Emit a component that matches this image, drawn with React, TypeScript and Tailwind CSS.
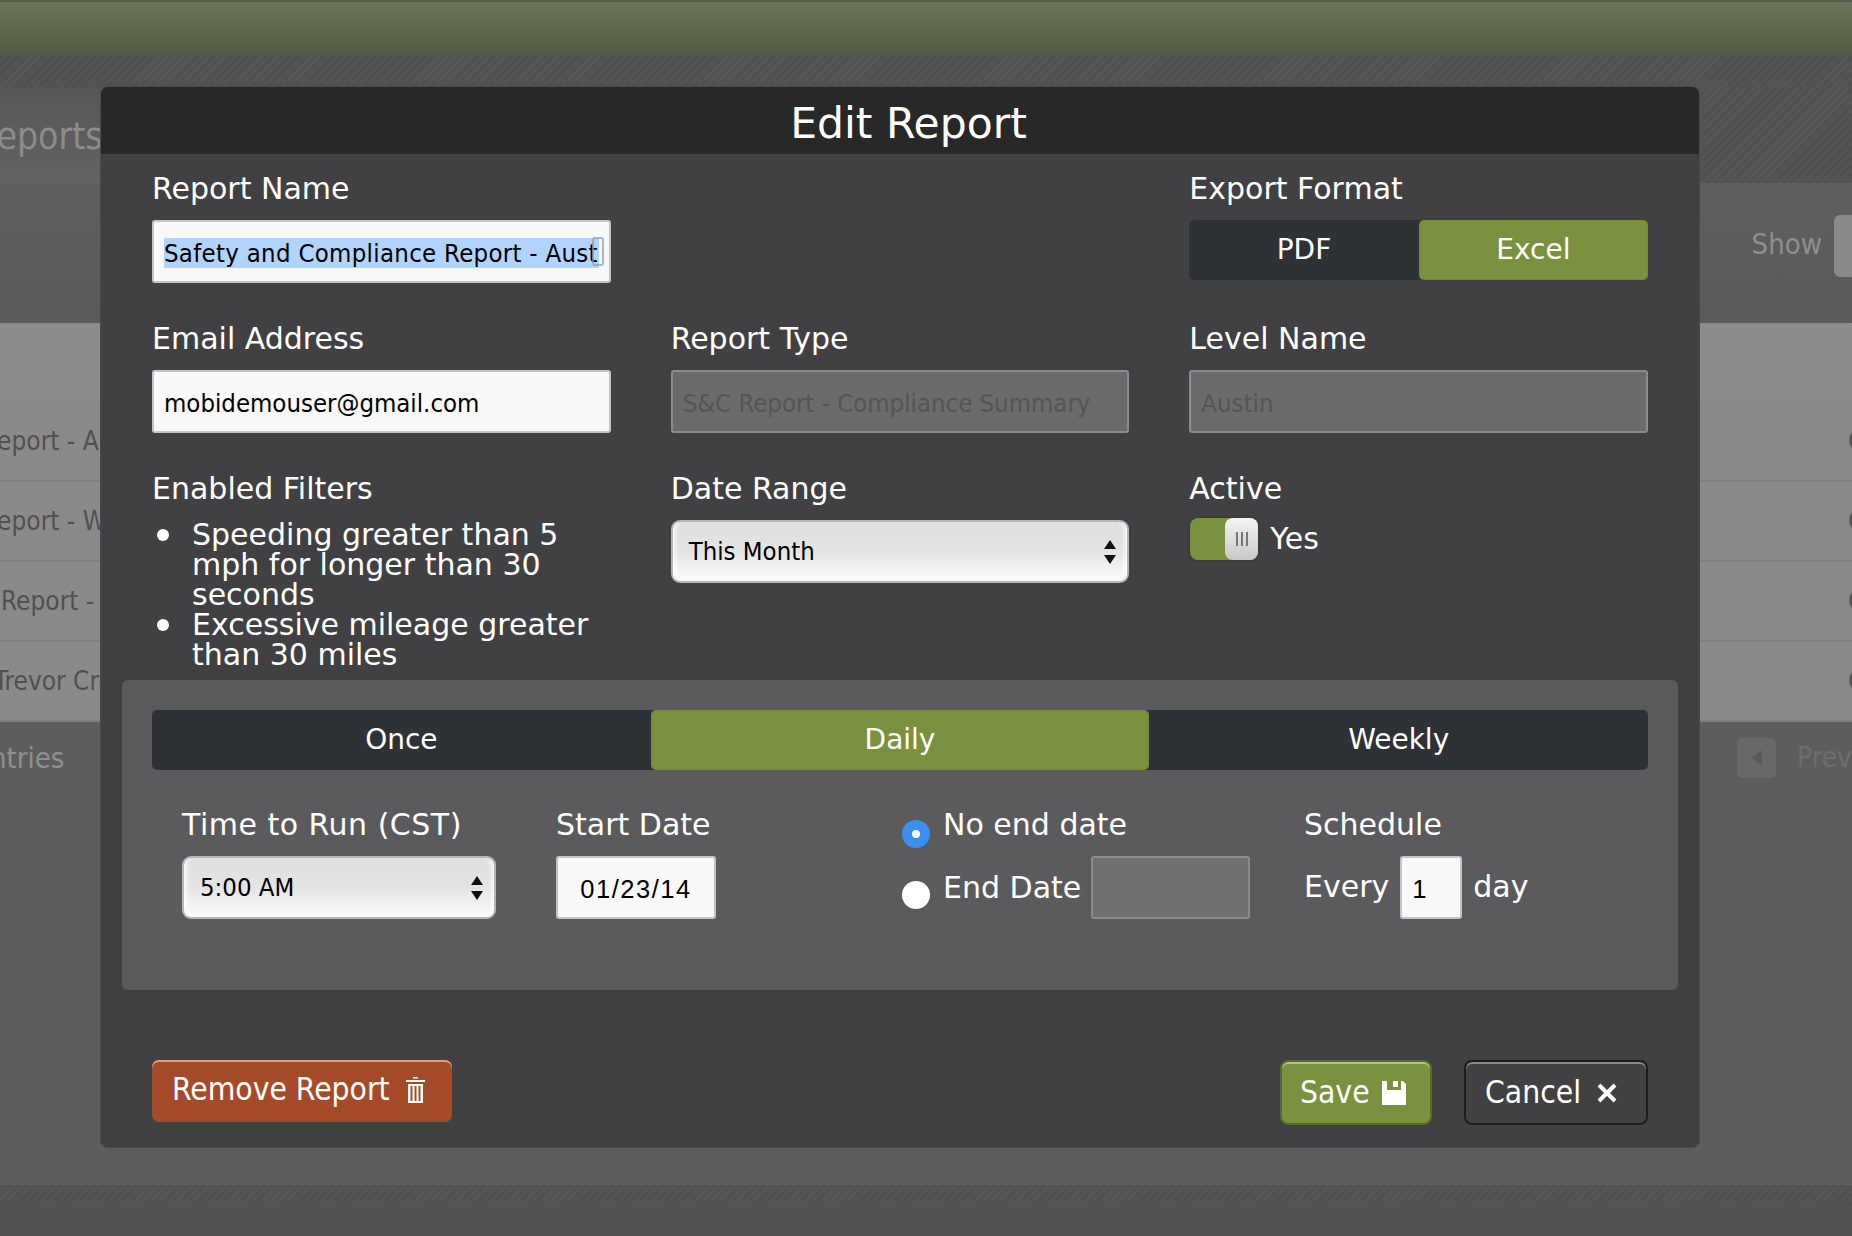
import type { ReactNode } from "react";

const stripes =
  "bg-[repeating-linear-gradient(135deg,#515153_0px,#515153_3px,#555557_3px,#555557_6px)]";
const condensed = "font-['DejaVu_Sans_Condensed','DejaVu_Sans',sans-serif]";

function Label({ children, className = "" }: { children: ReactNode; className?: string }) {
  return <div className={`h-[30px] leading-[30px] text-[30px] text-white whitespace-nowrap ${className}`}>{children}</div>;
}

function TextBox({ children, disabled, className = "" }: { children?: ReactNode; disabled?: boolean; className?: string }) {
  return (
    <div
      className={`flex h-[63px] items-center overflow-hidden rounded-[3px] border-2 px-[10px] pt-[3px] text-[25.500px] whitespace-nowrap font-['DejaVu_Sans_Condensed','DejaVu_Sans',sans-serif] ${
        disabled ? "border-[#8b8b8b] bg-[#6b6b6b] text-[#555555]" : "border-[#c4c4c4] bg-[#f8f8f8] text-black"
      } ${className}`}
    >
      {children}
    </div>
  );
}

function SelectBox({ value, className = "" }: { value: string; className?: string }) {
  return (
    <div
      className={`flex h-[63px] items-center justify-between rounded-[9px] border-2 border-[#b5b5b5] bg-gradient-to-b from-[#dfdfdf] via-[#e4e4e4] to-[#fbfbfb] pl-[16px] pr-[10px] text-[25.500px] text-black shadow-[inset_6px_0_5px_-4px_#ffffff,inset_-6px_0_5px_-4px_#ffffff] font-['DejaVu_Sans_Condensed','DejaVu_Sans',sans-serif] ${className}`}
    >
      <span className="-mt-[1px]">{value}</span>
      <svg width="14" height="24" viewBox="0 0 14 24">
        <path d="M7 0 13 9H1Z M7 24 1 15H13Z" fill="#111" />
      </svg>
    </div>
  );
}

function Segmented({ items, active }: { items: string[]; active: string }) {
  return (
    <div className="flex h-[60px] rounded-[5px] bg-[#2e3136] text-[28px] text-white">
      {items.map((item) => (
        <div
          key={item}
          className={`flex flex-1 items-center justify-center rounded-[5px] ${
            item === active ? "bg-[#7a9140] shadow-[inset_0_0_2px_#5f7432]" : ""
          }`}
        >
          {item}
        </div>
      ))}
    </div>
  );
}

function TableRow({ text, offset }: { text: string; offset: string }) {
  return (
    <div className="flex h-[80px] items-center justify-between overflow-hidden border-b-2 border-[#7f7f7f] bg-[#8a8a8a] text-[26px] text-[#505050] whitespace-nowrap">
      <span className={offset}>{text}</span>
      <span className="w-[4px] overflow-hidden">C</span>
    </div>
  );
}

function Backdrop() {
  return (
    <div className={`flex h-[1236px] flex-col overflow-hidden ${condensed}`}>
      <div className="h-[56px] shrink-0 border-t-2 border-[#555a50] bg-gradient-to-b from-[#6b755a] to-[#525945]" />
      <div className={`h-[31px] shrink-0 ${stripes}`} />
      <div className="flex h-[96px] shrink-0">
        <div className="w-[120px] overflow-hidden bg-gradient-to-b from-[#565656] to-[#636363] pt-[25px] text-[37px] leading-[50px] text-[#8c8c8c] whitespace-nowrap">
          <span className="-ml-[25px] inline-block">Reports</span>
        </div>
        <div className={`flex-1 ${stripes}`} />
      </div>
      <div className="flex h-[140px] shrink-0 items-start justify-end bg-gradient-to-b from-[#5f5f5f] to-[#5a5a5a] pt-[32px]">
        <span className="mt-[14px] mr-[12px] text-[29px] leading-[30px] text-[#8f8f8f]">Show</span>
        <div className="h-[62px] w-[18px] rounded-l-[6px] bg-[#8a8a8a]" />
      </div>
      <div className="h-[79px] shrink-0 bg-[#8c8c8c]" />
      <TableRow text="Report - Austin" offset="-ml-[18px]" />
      <TableRow text="Report - West" offset="-ml-[18px]" />
      <TableRow text="Report - Dallas" offset="ml-[1px]" />
      <TableRow text="Trevor Creek" offset="-ml-[6px]" />
      <div className="flex h-[463px] shrink-0 items-start justify-between bg-[#5d5d5d] pt-[16px]">
        <span className="-ml-[51px] text-[29px] leading-[40px] text-[#8f8f8f]">4 entries</span>
        <div className="flex items-center gap-[21px]">
          <div className="flex h-[40px] w-[39px] items-center justify-center rounded-[5px] bg-[#686868]">
            <svg width="10" height="16" viewBox="0 0 10 16">
              <path d="M10 0V16L0 8Z" fill="#5a5a5a" />
            </svg>
          </div>
          <span className="w-[55px] overflow-hidden text-[28px] leading-[40px] text-[#6d6d6d]">Previous</span>
        </div>
      </div>
      <div className={`h-[20px] shrink-0 ${stripes}`} />
      <div className="flex-1 bg-[#535353]" />
    </div>
  );
}

export default function App() {
  return (
    <div className="relative h-[1236px] overflow-hidden bg-[#535353]">
      <Backdrop />

      <div className="absolute left-[101px] top-[87px] h-[1060px] w-[1598px] overflow-hidden rounded-[7px] bg-[#414143] font-['DejaVu_Sans',sans-serif] shadow-[0_0_0_1px_#4a4a4c]">
        <div className="flex h-[67px] items-center justify-center bg-[#282828] pl-[17px] pt-[6px] text-[42.500px] text-white">Edit Report</div>

        <div className="grid grid-cols-3 gap-x-[60px] gap-y-[41px] px-[51px] pt-[20px]">
          <div>
            <Label className="mb-[16px]">Report Name</Label>
            <TextBox className="relative">
              <span className="flex h-[30px] w-[436px] items-center overflow-hidden bg-[#b0d4fb] tracking-[0.300px]">
                Safety and Compliance Report - Austin
              </span>
              <span className="absolute right-[5px] top-[15px] h-[29px] w-[12px] rounded-[3px] border-2 border-[#8c9aa8]/70" />
            </TextBox>
          </div>
          <div />
          <div>
            <Label className="mb-[16px]">Export Format</Label>
            <div className="flex h-[60px] rounded-[5px] bg-[#2e3136] text-[28px] text-white">
              <div className="flex flex-1 items-center justify-center">PDF</div>
              <div className="flex flex-1 items-center justify-center rounded-[5px] bg-[#7a9140] shadow-[inset_0_0_2px_#5f7432]">Excel</div>
            </div>
          </div>

          <div>
            <Label className="mb-[16px]">Email Address</Label>
            <TextBox>mobidemouser@gmail.com</TextBox>
          </div>
          <div>
            <Label className="mb-[16px]">Report Type</Label>
            <TextBox disabled>S&amp;C Report - Compliance Summary</TextBox>
          </div>
          <div>
            <Label className="mb-[16px]">Level Name</Label>
            <TextBox disabled>Austin</TextBox>
          </div>

          <div>
            <Label className="mb-[16px]">Enabled Filters</Label>
            <ul className="h-[150px] text-[30px] leading-[30px] text-white">
              <li className="flex">
                <span className="ml-[5px] mr-[23px] mt-[9px] h-[12px] w-[12px] shrink-0 rounded-full bg-white" />
                <span>Speeding greater than 5 mph for longer than 30 seconds</span>
              </li>
              <li className="flex">
                <span className="ml-[5px] mr-[23px] mt-[9px] h-[12px] w-[12px] shrink-0 rounded-full bg-white" />
                <span>Excessive mileage greater than 30 miles</span>
              </li>
            </ul>
          </div>
          <div>
            <Label className="mb-[16px]">Date Range</Label>
            <SelectBox value="This Month" />
          </div>
          <div>
            <Label className="mb-[14px]">Active</Label>
            <div className="ml-[1px] flex items-center gap-[12px]">
              <div className="relative h-[42px] w-[68px] rounded-[8px] bg-[#7a9140] shadow-[0_0_3px_#2e2e2e]">
                <div className="absolute inset-y-0 right-0 flex w-[33px] items-center justify-center gap-[3px] rounded-[8px] bg-gradient-to-b from-[#f4f4f4] to-[#c8c8c8]">
                  <span className="h-[14px] w-[2px] bg-[#777777]" />
                  <span className="h-[14px] w-[2px] bg-[#777777]" />
                  <span className="h-[14px] w-[2px] bg-[#777777]" />
                </div>
              </div>
              <span className="text-[30px] leading-[36px] text-white">Yes</span>
            </div>
          </div>
        </div>

        <div className="mx-[21px] mt-[10px] h-[310px] rounded-[6px] bg-[#5b5b5d] px-[30px] pt-[30px]">
          <Segmented items={["Once", "Daily", "Weekly"]} active="Daily" />
          <div className="flex pl-[30px] pt-[40px]">
            <div className="w-[374px]">
              <Label className="mb-[16px] tracking-[0.500px]">Time to Run (CST)</Label>
              <SelectBox value="5:00 AM" className="w-[314px]" />
            </div>
            <div className="w-[346px]">
              <Label className="mb-[16px]">Start Date</Label>
              <TextBox className="w-[160px] justify-center font-['Liberation_Sans',sans-serif] tracking-[1.500px]">01/23/14</TextBox>
            </div>
            <div className="w-[402px]">
              <div className="flex h-[46px] items-start gap-[13px]">
                <span className="mt-[10px] flex h-[28px] w-[28px] items-center justify-center rounded-full bg-[#3b8ff0]">
                  <span className="h-[8px] w-[8px] rounded-full bg-white" />
                </span>
                <Label>No end date</Label>
              </div>
              <div className="flex items-center">
                <span className="mr-[13px] mt-[14px] h-[28px] w-[28px] rounded-full bg-white" />
                <Label className="w-[148px]">End Date</Label>
                <TextBox disabled className="w-[159px] bg-[#707070]" />
              </div>
            </div>
            <div>
              <Label className="mb-[16px]">Schedule</Label>
              <div className="flex items-center gap-[11px]">
                <span className="-mt-[1px] text-[30px] leading-[36px] text-white">Every</span>
                <TextBox className="w-[62px] font-['Liberation_Sans',sans-serif]">1</TextBox>
                <span className="-mt-[1px] text-[30px] leading-[36px] text-white">day</span>
              </div>
            </div>
          </div>
        </div>

        <div className={`mt-[70px] flex items-start justify-between px-[51px] text-[31.500px] text-white ${condensed}`}>
          <button className="flex h-[62px] w-[300px] items-center gap-[16px] rounded-[7px] bg-[#a64b29] pb-[2px] pl-[20px] shadow-[inset_0_2px_0_#cfa08e]">
            Remove Report
            <svg width="20" height="26" viewBox="0 0 20 26" fill="white">
              <path d="M7 0h5v1.500H7ZM0 3h19v2H0ZM2 7h15v19H2ZM4.500 9v15h2V9ZM8.500 9v15h2V9ZM12.500 9v15h2V9Z" fillRule="evenodd" />
            </svg>
          </button>
          <div className="flex gap-[32px]">
            <button className="flex h-[65px] w-[152px] items-center gap-[12px] rounded-[8px] border-2 border-[#566a2c] bg-[#7a9140] pl-[18px] shadow-[inset_0_2px_0_#b4c194]">
              Save
              <svg width="24" height="24" viewBox="0 0 24 24" fill="white">
                <path d="M0 0h5v9h14V0h2l3 3v21H0ZM11 0h5v6h-5Z" />
              </svg>
            </button>
            <button className="flex h-[65px] w-[184px] items-center gap-[16px] rounded-[8px] border-2 border-[#1c1c1c] bg-[#414143] pl-[19px] shadow-[inset_0_2px_0_#8a8a8a]">
              Cancel
              <svg width="20" height="20" viewBox="0 0 20 20" stroke="white" strokeWidth="4">
                <path d="M2 2 18 18M18 2 2 18" />
              </svg>
            </button>
          </div>
        </div>
      </div>
    </div>
  );
}
